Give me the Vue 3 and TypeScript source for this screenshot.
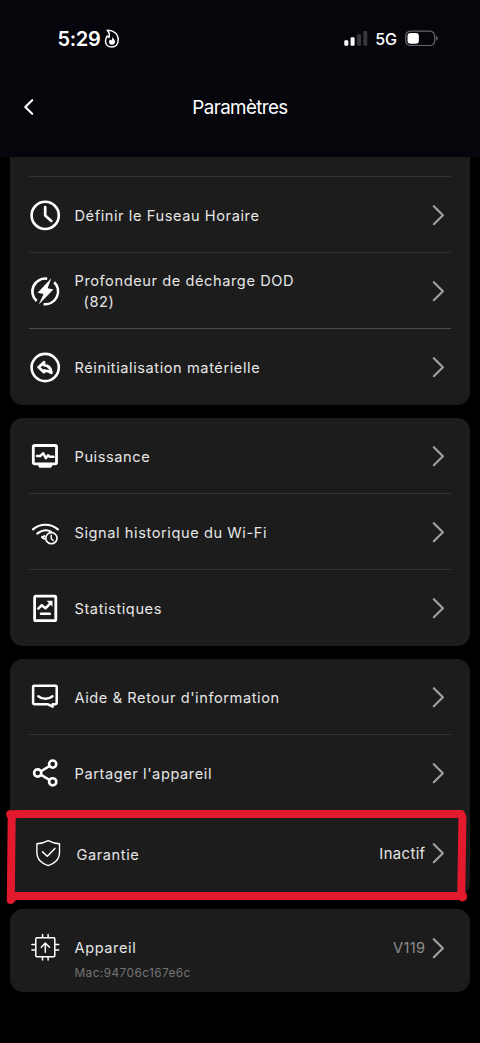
<script setup lang="ts">
interface Row {
  icon: string
  label: string
  extra?: string
  value?: string
  muted?: boolean
  mac?: string
}

const groups: { name: string; rows: Row[] }[] = [
  {
    name: 'first',
    rows: [
      { icon: 'clock', label: 'Définir le Fuseau Horaire' },
      { icon: 'bolt', label: 'Profondeur de décharge DOD', extra: '(82)' },
      { icon: 'reset', label: 'Réinitialisation matérielle' },
    ],
  },
  {
    name: 'second',
    rows: [
      { icon: 'monitor', label: 'Puissance' },
      { icon: 'wifi', label: 'Signal historique du Wi-Fi' },
      { icon: 'stats', label: 'Statistiques' },
    ],
  },
  {
    name: 'third',
    rows: [
      { icon: 'feedback', label: "Aide & Retour d'information" },
      { icon: 'share', label: "Partager l'appareil" },
      { icon: 'shield', label: 'Garantie', value: 'Inactif' },
    ],
  },
  {
    name: 'fourth',
    rows: [{ icon: 'chip', label: 'Appareil', value: 'V119', muted: true, mac: 'Mac:94706c167e6c' }],
  },
]
</script>

<template>
  <main class="screen">
    <header class="header">
      <div class="status">
        <div class="time">
          <span class="clock-text">5:29</span>
          <svg class="flame" width="16" height="20" viewBox="0 0 16 20" fill="none">
            <path d="M3.200 1.200C8.800.8 14.200 4.600 14.200 10.800c0 4.600-2.800 7.200-6.400 7.200-3.800 0-6.300-2.600-6.300-6 0-2.300.9-3.700 1.700-5l1.800 1.500C5.700 6 5.300 3.200 3.200 1.200z" stroke="#fff" stroke-width="1.500" stroke-linejoin="round" />
            <path d="M8.500 7.200c.2 2 2.500 3.300 2.500 5.600 0 2-1.300 3-3 3s-3-1.100-3-2.800c0-1.200.6-2 1.200-2.600l1.300 1c.8-1.200 1.100-2.500 1-4.200z" fill="#fff" />
          </svg>
        </div>
        <div class="indicators">
          <svg class="signal" width="24" height="16" viewBox="0 0 24 16">
            <rect x="0.300" y="9.300" width="4" height="5.500" rx="1.200" fill="#fff" />
            <rect x="6.600" y="6.200" width="4" height="8.600" rx="1.200" fill="#fff" />
            <rect x="13" y="3.200" width="4" height="11.600" rx="1.200" fill="#37373b" />
            <rect x="19.300" y="0.100" width="4" height="14.700" rx="1.200" fill="#37373b" />
          </svg>
          <span class="network">5G</span>
          <svg class="battery" width="34" height="17" viewBox="0 0 34 17">
            <rect x="0.700" y="1.100" width="29" height="14.400" rx="4.800" fill="none" stroke="#67676b" stroke-width="1.200" />
            <rect x="2.500" y="2.900" width="11.400" height="10.900" rx="3.200" fill="#fff" />
            <path d="M31.200 6.100c2.100.7 2.100 3.900 0 4.600z" fill="#67676b" />
          </svg>
        </div>
      </div>
      <div class="titlebar">
        <svg class="back" width="14" height="20" viewBox="0 0 14 20" fill="none">
          <path d="M10.200 3.200 3.300 10l6.900 6.800" stroke="#fff" stroke-width="2.100" stroke-linecap="round" stroke-linejoin="round" />
        </svg>
        <h1>Paramètres</h1>
      </div>
    </header>

    <section v-for="group in groups" :key="group.name" class="card" :class="group.name">
      <div v-for="row in group.rows" :key="row.icon" class="row" :class="row.icon">
        <svg class="icon" width="32" height="32" viewBox="0 0 32 32" fill="none" stroke="#fff" stroke-width="2.600" stroke-linecap="round" stroke-linejoin="round">
          <template v-if="row.icon === 'clock'">
            <circle cx="16.200" cy="16.400" r="13.600" />
            <path d="M16.200 8v8.600l6.100 5.300" stroke-width="2.700" />
          </template>
          <template v-else-if="row.icon === 'bolt'">
            <path d="M18.200 3.700A12.900 12.900 0 0 0 7.600 26M25.200 7.200A12.900 12.900 0 0 1 14.600 29.200" stroke-linecap="butt" />
            <path d="M22.300 3.200 8.600 17.700l6 1.200L9.700 29.600 24.400 14.400l-5.800-1.200z" fill="#fff" stroke="none" />
          </template>
          <template v-else-if="row.icon === 'reset'">
            <circle cx="16.200" cy="16.500" r="13.600" />
            <path d="M9.600 16.200 15 11.200v3c4.200.4 7 3 7.400 7.700-1.900-1.700-4-2.300-7.400-2.200v1.500z" stroke-width="2.800" />
          </template>
          <template v-else-if="row.icon === 'monitor'">
            <rect x="4.300" y="5.500" width="23.200" height="18.300" rx="1.200" stroke-width="2.800" />
            <path d="M8.500 24.500h15.300l-1.700 3.300H10.300z" fill="#fff" stroke="none" />
            <path d="M8 16h3.300l3-2.800 2.500 5 2.200-3 1.500 1.500H24.500" stroke-width="2.400" />
          </template>
          <template v-else-if="row.icon === 'wifi'">
            <path d="M3.900 13.300c7.400-6.100 17.600-6.100 25 0" stroke-width="2.200" />
            <path d="M8.200 17.600c5.300-4.100 10.500-4 14-1.800M15.300 20.100l-2.300 1 2.200 1.700" stroke-width="2" />
            <circle cx="22.400" cy="22.200" r="5.600" stroke-width="1.600" />
            <path d="M22.200 19.200v3.300l2 2.100" stroke-width="1.400" />
          </template>
          <template v-else-if="row.icon === 'stats'">
            <rect x="5.600" y="4.200" width="21.200" height="24.400" rx="1.200" stroke-width="2.800" />
            <path d="m9.300 16.700 3.500-3.500 3.700 3.200 4.600-4.700M12 21.800h8.800" stroke-width="2.500" />
            <path d="M17.600 8.800h5.900v6z" fill="#fff" stroke="none" />
          </template>
          <template v-else-if="row.icon === 'feedback'">
            <path d="M5.200 4.700h21.400c.8 0 1.100.4 1.100 1.100v16.300c0 .7-.4 1.100-1.100 1.100h-3v2.500l-5.100-2.500H5.200c-.7 0-1.100-.4-1.100-1.100V5.800c0-.7.400-1.100 1.100-1.100z" stroke-width="2.500" />
            <path d="M9.300 15.200c4 3.300 10.200 3.300 14.200 0" stroke-width="2.400" />
          </template>
          <template v-else-if="row.icon === 'share'">
            <path d="m12 14.200 8.400-5.100M12 17.900l8.400 4.900" stroke-width="2.500" />
            <circle cx="23.700" cy="7.100" r="3.600" />
            <circle cx="8.700" cy="16" r="3.600" />
            <circle cx="23.700" cy="24.800" r="3.600" />
          </template>
          <template v-else-if="row.icon === 'shield'">
            <path d="M16.200 3.700c3.700 2 7.400 3 11.300 3.100v8.600c0 7-5.300 11.600-11.300 13.300C10.200 27 4.900 22.400 4.900 15.400V6.800c3.900-.1 7.600-1.100 11.300-3.100z" stroke-width="1.400" />
            <path d="m10.500 14.900 4.800 4.300 7.600-7.800" stroke-width="1.500" />
          </template>
          <template v-else>
            <rect x="6.800" y="6.700" width="19" height="19" rx="1" stroke-width="1.500" />
            <path d="M13.500 6V3.400M19.100 6V3.400M13.500 29v-2.600M19.100 29v-2.600M6 13.500H2.900M6 19h-3.100M29.700 13.500h-3.100M29.700 19h-3.100M16.300 21.300v-9M12.300 16.200l4-4.100 4.200 4.100" stroke-width="1.500" />
          </template>
        </svg>
        <div class="text">
          <span class="label">{{ row.label }}</span>
          <span v-if="row.extra" class="label extra">{{ row.extra }}</span>
          <span v-if="row.mac" class="mac">{{ row.mac }}</span>
        </div>
        <span v-if="row.value" class="value" :class="{ muted: row.muted }">{{ row.value }}</span>
        <svg class="chevron" width="14" height="24" viewBox="0 0 14 24" fill="none">
          <path d="M2.800 3.200 11.900 12.200 2.800 21.200" stroke="#a0a0a0" stroke-width="2.200" stroke-linecap="round" stroke-linejoin="round" />
        </svg>
      </div>

      <svg v-if="group.name === 'third'" class="marker" width="480" height="100" viewBox="0 806 480 100" fill="none" stroke="#e3192d" stroke-width="8" stroke-linecap="round" stroke-linejoin="round">
        <path d="M10.200 814.300 24 813.900H461L462.400 817 461.300 893 462.700 897.300" />
        <path d="M11.700 816 10.800 900 14 896.100H463" />
      </svg>
    </section>
  </main>
</template>

<style>
body {
  margin: 0;
  background: #000;
}
</style>

<style scoped>
.screen {
  width: 480px;
  height: 1043px;
  overflow: hidden;
  background: #000;
  color: #e6e6e6;
  font-family: Inter, "Liberation Sans", sans-serif;
}

.header {
  box-sizing: border-box;
  height: 157px;
  padding-top: 24px;
  background: #05050b;
  color: #fff;
}

.status {
  display: flex;
  align-items: center;
  justify-content: space-between;
  height: 29px;
  padding: 0 41px 0 57.500px;
}

.time,
.indicators {
  display: flex;
  align-items: center;
}

.clock-text {
  font-size: 20px;
  font-weight: 600;
  letter-spacing: -0.300px;
}

.flame {
  margin-left: 3px;
}

.network {
  margin: 1px 8px 0 7px;
  font-size: 16px;
  font-weight: 500;
}

.titlebar {
  display: grid;
  grid-template-columns: 60px 1fr 60px;
  align-items: center;
  height: 108px;
}

.back {
  margin-left: 22px;
}

h1 {
  margin: 1px 0 0;
  font-size: 18.800px;
  font-weight: 400;
  letter-spacing: -0.600px;
  text-align: center;
}

.card {
  position: relative;
  box-sizing: border-box;
  margin: 0 10px 13px;
  padding: 0 19px;
  border-radius: 13px;
  background: #1c1c1c;
}

.card.first {
  border-radius: 0 0 13px 13px;
}

.card.first::before {
  content: "";
  display: block;
  box-sizing: border-box;
  height: 20px;
  border-bottom: 1px solid #353535;
}

.row {
  display: flex;
  align-items: center;
  box-sizing: border-box;
  height: 76px;
  border-bottom: 1px solid #353535;
}

.row:last-of-type {
  border-bottom-color: transparent;
}

.row.bolt {
  border-bottom-color: #4a4a4a;
}

.row.share {
  border-bottom-color: transparent;
}

.icon {
  flex: none;
}

.text {
  display: flex;
  flex: 1;
  flex-direction: column;
  margin-left: 13.500px;
  padding-top: 4px;
}

.bolt .text {
  padding-top: 3px;
}

.label {
  font-size: 14.600px;
  line-height: 21px;
  letter-spacing: 0.580px;
  white-space: pre;
}

.extra {
  padding-left: 9px;
}

.value {
  margin-right: 5.500px;
  padding-top: 2px;
  font-size: 14.800px;
  letter-spacing: 0.400px;
}

.value.muted {
  padding-top: 1px;
  color: #8c8c8c;
  font-size: 14.600px;
}

.chevron {
  flex: none;
  margin-right: 6px;
}

.row.shield {
  height: 85px;
}

.shield .icon {
  margin-left: 2.500px;
}

.shield .text {
  margin-left: 13px;
}

.row.chip {
  height: 83px;
  align-items: flex-start;
  padding-top: 22px;
}

.chip .text {
  padding-top: 7px;
}

.chip .value {
  margin-top: 7px;
}

.chip .chevron {
  margin-top: 5px;
}

.mac {
  margin-top: 4.500px;
  color: #747474;
  font-size: 11.800px;
  line-height: 18px;
  letter-spacing: 0.450px;
}

.marker {
  position: absolute;
  top: 147px;
  left: -10px;
}
</style>
